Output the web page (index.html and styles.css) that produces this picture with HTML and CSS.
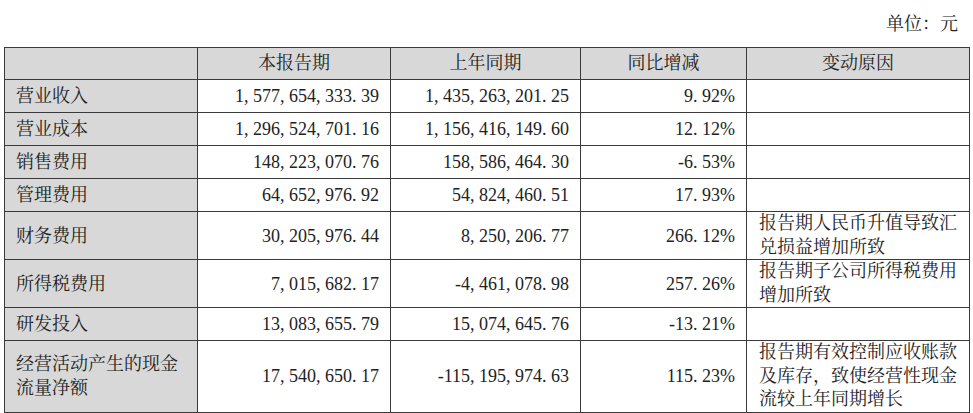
FILE: index.html
```html
<!DOCTYPE html>
<html lang="zh-CN">
<head>
<meta charset="utf-8">
<link rel="stylesheet" href="styles.css">
</head>
<body>
<div class="page">
  <div class="unit">单位：元</div>
  <table class="fin">
    <colgroup>
      <col class="c1"><col class="c2"><col class="c3"><col class="c4"><col class="c5">
    </colgroup>
    <thead>
      <tr>
        <th class="lab"></th>
        <th>本报告期</th>
        <th>上年同期</th>
        <th>同比增减</th>
        <th>变动原因</th>
      </tr>
    </thead>
    <tbody>
      <tr><td class="lab">营业收入</td><td class="num">1, 577, 654, 333. 39</td><td class="num">1, 435, 263, 201. 25</td><td class="num">9. 92%</td><td class="why"></td></tr>
      <tr><td class="lab">营业成本</td><td class="num">1, 296, 524, 701. 16</td><td class="num">1, 156, 416, 149. 60</td><td class="num">12. 12%</td><td class="why"></td></tr>
      <tr><td class="lab">销售费用</td><td class="num">148, 223, 070. 76</td><td class="num">158, 586, 464. 30</td><td class="num">-6. 53%</td><td class="why"></td></tr>
      <tr><td class="lab">管理费用</td><td class="num">64, 652, 976. 92</td><td class="num">54, 824, 460. 51</td><td class="num">17. 93%</td><td class="why"></td></tr>
      <tr><td class="lab">财务费用</td><td class="num">30, 205, 976. 44</td><td class="num">8, 250, 206. 77</td><td class="num">266. 12%</td><td class="why">报告期人民币升值导致汇兑损益增加所致</td></tr>
      <tr><td class="lab">所得税费用</td><td class="num">7, 015, 682. 17</td><td class="num">-4, 461, 078. 98</td><td class="num">257. 26%</td><td class="why">报告期子公司所得税费用增加所致</td></tr>
      <tr><td class="lab">研发投入</td><td class="num">13, 083, 655. 79</td><td class="num">15, 074, 645. 76</td><td class="num">-13. 21%</td><td class="why"></td></tr>
      <tr><td class="lab">经营活动产生的现金流量净额</td><td class="num">17, 540, 650. 17</td><td class="num">-115, 195, 974. 63</td><td class="num">115. 23%</td><td class="why">报告期有效控制应收账款及库存，致使经营性现金流较上年同期增长</td></tr>
    </tbody>
  </table>
</div>
</body>
</html>
```
FILE: styles.css
```css
html, body {
  margin: 0;
  padding: 0;
  background: #ffffff;
}
body {
  font-family: "Liberation Serif", "Noto Serif CJK SC", "Noto Sans CJK SC", serif;
  font-size: 18px;
  color: #222222;
}
.page {
  width: 973px;
  height: 413px;
  overflow: hidden;
}
.unit {
  height: 47px;
  line-height: 48px;
  text-align: right;
  padding-right: 15px;
  box-sizing: border-box;
}
.fin {
  margin-left: 4px;
  border-collapse: collapse;
  table-layout: fixed;
  width: 965px;
}
.c1 { width: 193px; }
.c2 { width: 193px; }
.c3 { width: 190px; }
.c4 { width: 166px; }
.c5 { width: 223px; }
.fin th, .fin td {
  border: 1px solid #3a3a3a;
  line-height: 24px;
  padding: 4px 11px 4px 11px;
  vertical-align: middle;
  font-weight: normal;
}
.fin th {
  background: #d8d8d8;
  text-align: center;
  padding: 3px 11px 4px 11px;
}
.fin td.lab {
  background: #d8d8d8;
  text-align: left;
  padding-left: 11px;
}
.fin td.num {
  text-align: right;
}
.fin td.why {
  padding: 0 6px 0 12px;
  line-height: 23.5px;
  text-align: left;
}
```
